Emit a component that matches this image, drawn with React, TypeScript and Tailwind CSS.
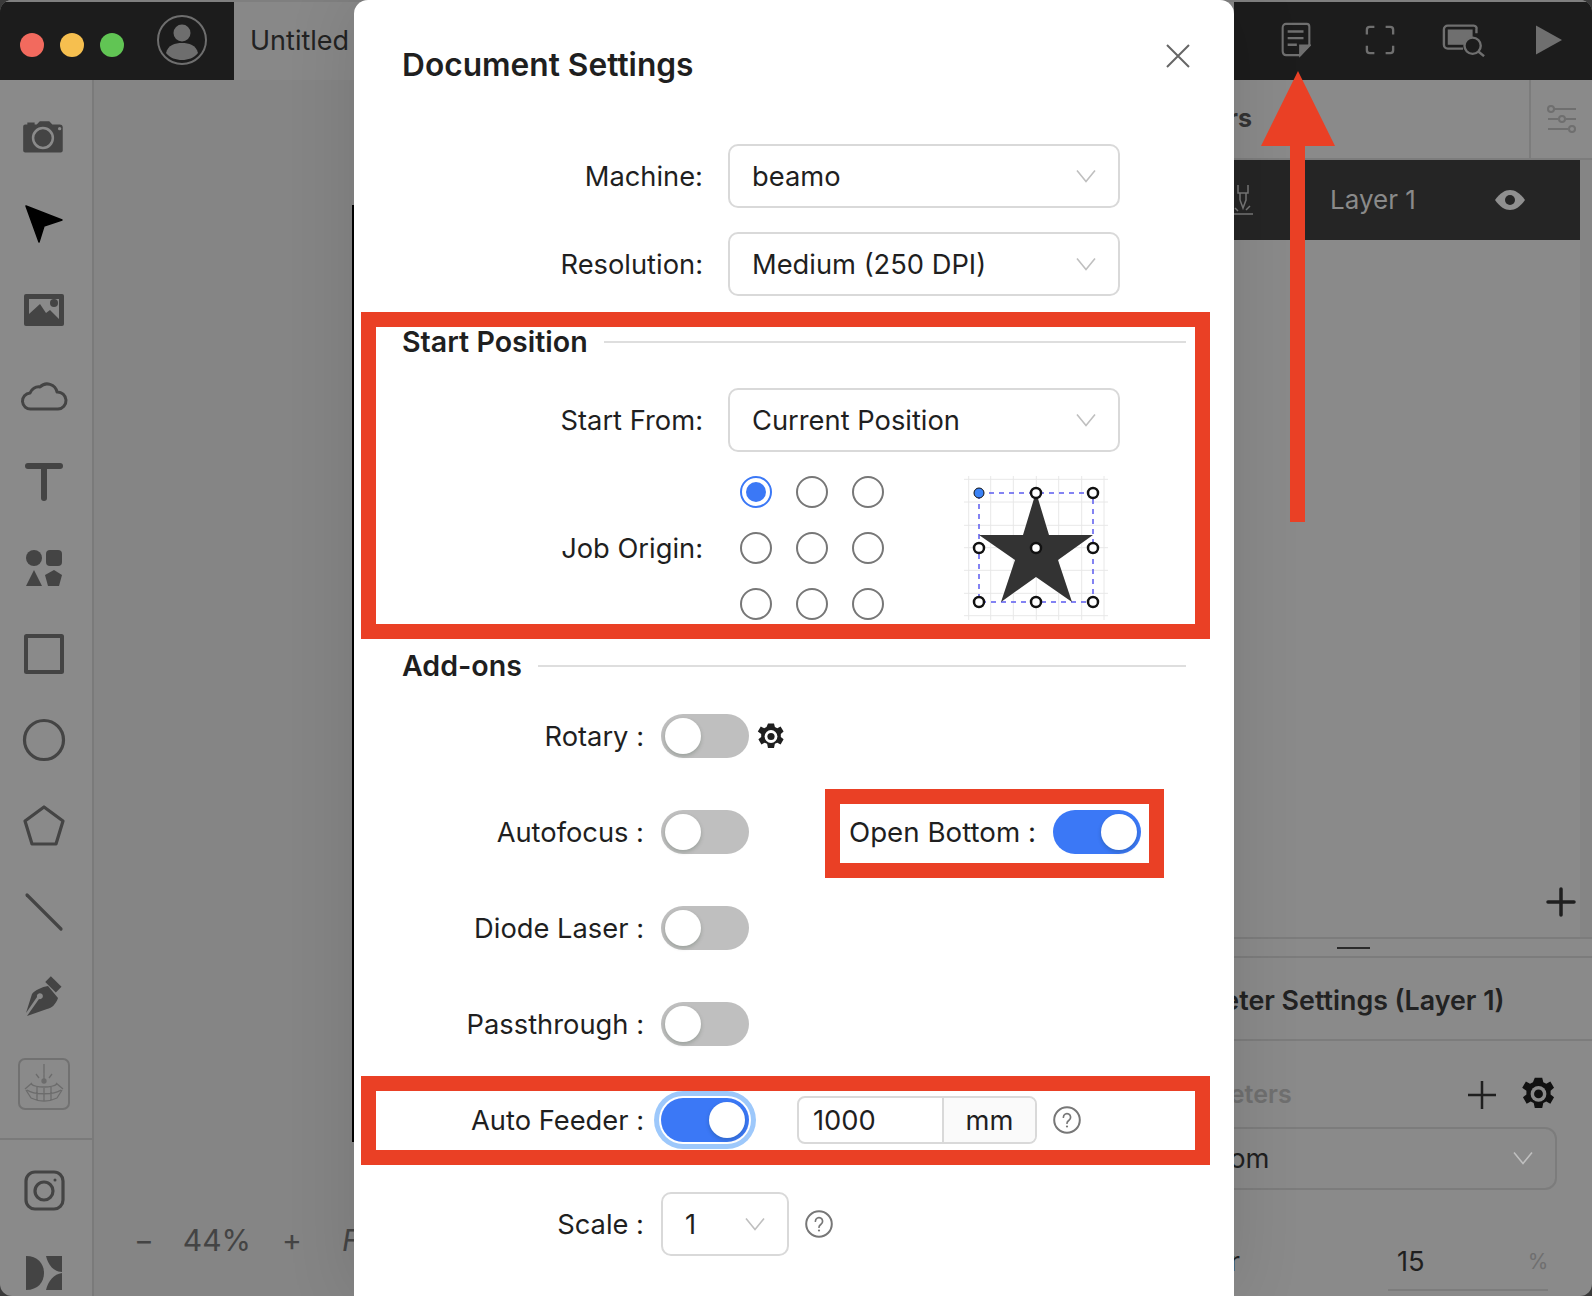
import React from "react";

const ink = "#444444";

function Slot({ children }: { children: React.ReactNode }) {
  return <div className="flex h-[86px] w-full items-center justify-center">{children}</div>;
}

function Glyph({ size = 48, children, fill = "none", stroke = ink, sw = 4 }: { size?: number; children: React.ReactNode; fill?: string; stroke?: string; sw?: number }) {
  return (
    <svg width={size} height={size} viewBox="0 0 48 48" fill={fill} stroke={stroke} strokeWidth={sw} strokeLinecap="round" strokeLinejoin="round">
      {children}
    </svg>
  );
}

function Chevron({ className = "" }: { className?: string }) {
  return (
    <svg width="20" height="14" viewBox="0 0 20 14" fill="none" stroke="#bfbfbf" strokeWidth="1.6" className={className}>
      <path d="M1 1.5 L10 12.5 L19 1.5" />
    </svg>
  );
}

function Select({ value, className = "" }: { value: string; className?: string }) {
  return (
    <div className={`flex h-[64px] w-[392px] items-center justify-between rounded-[10px] border-2 border-[#d9d9d9] bg-white pl-[22px] pr-[22px] text-[27.3px] text-[#1f1f1f] ${className}`}>
      <span className="pt-[2px]">{value}</span>
      <Chevron />
    </div>
  );
}

function Toggle({ on = false, focus = false }: { on?: boolean; focus?: boolean }) {
  return (
    <div
      className={`flex h-[44px] w-[88px] shrink-0 items-center rounded-full px-[4px] ${on ? "justify-end bg-[#3b78f6]" : "justify-start bg-[#bfbfbf]"} ${focus ? "shadow-[0_0_0_2px_#ffffff,0_0_0_7px_#9dc8fb]" : ""}`}
    >
      <div className="h-[36px] w-[36px] rounded-full bg-white shadow-[0_2px_4px_rgba(0,35,11,0.2)]" />
    </div>
  );
}

function Help() {
  return (
    <svg width="28" height="28" viewBox="0 0 28 28" fill="none">
      <circle cx="14" cy="14" r="12.8" stroke="#777777" strokeWidth="2" />
      <path d="M10.4 11.2a3.6 3.6 0 1 1 5.6 3c-1.300.9-2 1.500-2 3" stroke="#777777" strokeWidth="1.7" strokeLinecap="round" />
      <circle cx="14" cy="20.500" r="1.100" fill="#777777" />
    </svg>
  );
}

function Gear({ color = "#1f1f1f", hole = "#ffffff", size = 30 }: { color?: string; hole?: string; size?: number }) {
  return (
    <svg width={size} height={size} viewBox="0 0 30 30">
      <path
        fill={color}
        d="M12 1.500h6l.9 3.600 2.400 1.100 3.300-1.700 3 5.100-2.800 2.400v2.900l2.800 2.400-3 5.100-3.300-1.700-2.400 1.100-.9 4.200h-6l-.9-4.200-2.400-1.100-3.300 1.700-3-5.100 2.800-2.400v-2.900L1.800 9.600l3-5.100 3.300 1.700 2.400-1.100z"
      />
      <circle cx="15" cy="14.500" r="6.400" fill={hole} />
      <circle cx="15" cy="14.500" r="3.600" fill={color} />
    </svg>
  );
}

function Heading({ title }: { title: string }) {
  return (
    <div className="ml-[48px] mr-[48px] flex h-[24px] items-center gap-[16px]">
      <span className="whitespace-nowrap text-[28.6px] font-semibold leading-[24px] text-[#1f1f1f]">{title}</span>
      <div className="h-[2px] flex-1 bg-[#dedede]" />
    </div>
  );
}

function AddOn({ label, children }: { label: string; children: React.ReactNode }) {
  return (
    <div className="flex h-[44px] items-center">
      <span className="w-[290px] whitespace-nowrap pt-[2px] text-right text-[27.3px] text-[#1f1f1f]">{label}</span>
      <div className="ml-[17px] flex items-center">{children}</div>
    </div>
  );
}

function Radio({ on = false }: { on?: boolean }) {
  return (
    <div className={`flex h-[32px] w-[32px] items-center justify-center rounded-full border-2 ${on ? "border-[#3b78f6]" : "border-[#777777]"} bg-white`}>
      {on ? <div className="h-[20px] w-[20px] rounded-full bg-[#3b78f6]" /> : null}
    </div>
  );
}

function StarDiagram() {
  const vs = [4.7, 26.7, 49.3, 72.3, 94.7, 117.7, 140];
  const hs = [3.3, 26, 49.3, 71.7, 94.3, 117.3, 139.7];
  const hx = [15, 72, 129];
  const hy = [17, 72, 126];
  return (
    <svg width="144" height="144" viewBox="0 0 144 144" className="shrink-0">
      {vs.map((x) => (
        <line key={x} x1={x} x2={x} y1="0" y2="144" stroke="#e8e8e8" strokeWidth="1" />
      ))}
      {hs.map((y) => (
        <line key={y} x1="0" x2="144" y1={y} y2={y} stroke="#e8e8e8" strokeWidth="1" />
      ))}
      <rect x="15" y="17" width="114" height="109" fill="none" stroke="#5b5bf0" strokeWidth="1.500" strokeDasharray="5 5" />
      <polygon points="72,16 85,59 129,59 94,84 108,126 72,101 37,126 51,84 15,59 59,59" fill="#333333" />
      {hy.map((y, r) =>
        hx.map((x, c) => (
          <circle key={`${r}-${c}`} cx={x} cy={y} r="5" fill={r === 0 && c === 0 ? "#3b82f6" : "#ffffff"} stroke="#111111" strokeWidth={r === 0 && c === 0 ? 1 : 2.5} />
        ))
      )}
    </svg>
  );
}

function Sidebar() {
  return (
    <div className="flex h-full w-[94px] shrink-0 flex-col border-r-2 border-[#7a7a7a] bg-[#8a8a8a]">
      <div className="pr-[4px] pt-[15px]">
        <Slot>
          <Glyph size={50}>
            <path fill={ink} stroke="none" d="M4 13a2 2 0 0 1 2-2h2V9h7v2h2l3-3h9l3 3h7a3 3 0 0 1 3 3v22a2 2 0 0 1-2 2H6a2 2 0 0 1-2-2z" />
            <circle cx="23" cy="24" r="9.500" fill="none" stroke="#8a8a8a" strokeWidth="2.400" />
            <circle cx="39" cy="15" r="1.600" fill="#8a8a8a" stroke="none" />
          </Glyph>
        </Slot>
        <Slot>
          <Glyph>
            <path fill="#000000" stroke="#000000" strokeWidth="1.500" d="M6 6 L42 20 L24 26 L19 42 Z" />
          </Glyph>
        </Slot>
        <Slot>
          <Glyph>
            <rect x="4" y="8" width="40" height="32" rx="2" fill={ink} stroke="none" />
            <path fill="#8a8a8a" stroke="none" d="M9 28 V13 H39 V33 L30 24 L26 27 L20 18 Z" />
            <circle cx="34" cy="17" r="4" fill={ink} stroke="none" />
          </Glyph>
        </Slot>
        <Slot>
          <Glyph sw={3}>
            <path d="M11 37a8 8 0 0 1-1-16 9 9 0 0 1 10-6 10 10 0 0 1 17 5 8.500 8.500 0 0 1 1 17z" />
          </Glyph>
        </Slot>
        <Slot>
          <Glyph sw={6}>
            <path d="M8 8 H40 M24 8 V40" />
          </Glyph>
        </Slot>
        <Slot>
          <Glyph sw={0}>
            <circle cx="14" cy="14" r="8" fill={ink} />
            <rect x="26" y="6" width="16" height="16" rx="4" fill={ink} />
            <path d="M14 26 L22 42 H6 Z" fill={ink} />
            <path d="M34 26 L42 31 L39 42 H28 L25 31 Z" fill={ink} />
          </Glyph>
        </Slot>
        <Slot>
          <Glyph sw={4}>
            <rect x="6" y="6" width="36" height="36" rx="0.500" strokeLinejoin="miter" />
          </Glyph>
        </Slot>
        <Slot>
          <Glyph sw={3.200}>
            <circle cx="24" cy="24" r="19.500" />
          </Glyph>
        </Slot>
        <Slot>
          <Glyph sw={3.200}>
            <path d="M24 5 L43 19 L36 42 H12 L5 19 Z" />
          </Glyph>
        </Slot>
        <Slot>
          <Glyph sw={3.200}>
            <path d="M7 7 L41 41" />
          </Glyph>
        </Slot>
        <Slot>
          <Glyph>
            <path fill={ink} stroke="none" d="M28 12 L38 24 C36 30 32 34 27 35 L7 42 L19 25 a3 3 0 1 0 -2 -2 L6 39 L12 20 C15 16 22 13 28 12 Z" />
            <rect x="29" y="3" width="8" height="15" transform="rotate(-45 33 10)" fill={ink} stroke="none" />
          </Glyph>
        </Slot>
        <Slot>
          <div className="flex h-[52px] w-[52px] items-center justify-center rounded-[7px] border-2 border-[#717171]">
            <svg width="46" height="46" viewBox="0 0 46 46" fill="none" stroke="#6c6c6c" strokeWidth="1.300">
              <path d="M23 3 V20 M15 13 l3 4 M31 13 l-3 4" />
              <circle cx="23" cy="20" r="2" fill="#6c6c6c" />
              <path d="M6 29 C13 34 33 34 40 29 M10 23 C15 27 31 27 36 23 M4 28 L11 22 M42 28 L35 22 M10 37 C18 41 28 41 36 37 M5 29 L10 37 M41 29 L36 37 M16 26 V39 M23 27 V40 M30 26 V39" />
            </svg>
          </div>
        </Slot>
      </div>
      <div className="mt-[11px] border-t-2 border-[#7a7a7a] pr-[4px] pt-[8px]">
        <Slot>
          <Glyph sw={3.200}>
            <rect x="6" y="5" width="37" height="37" rx="9" />
            <circle cx="24" cy="24" r="9" />
            <circle cx="35" cy="13" r="1.500" fill={ink} stroke="none" />
          </Glyph>
        </Slot>
        <div className="mt-[22px] flex justify-center">
          <svg width="36" height="34" viewBox="0 0 36 34" fill={ink}>
            <path d="M0 0 C12 0 18 8 18 17 C18 26 12 34 0 34 Z" />
            <path d="M20 0 H36 V16 C28 16 22 9 20 0 Z" />
            <path d="M36 17 V34 H20 C22 25 28 18 36 17 Z" />
          </svg>
        </div>
      </div>
    </div>
  );
}

function TopBar() {
  return (
    <div className="flex h-[80px] shrink-0 border-t-2 border-[#7f7f7f] bg-[#888888]">
      <div className="flex w-[234px] items-center bg-[#1c1c1c] pl-[20px]">
        <div className="mt-[7px] h-[24px] w-[24px] rounded-full bg-[#f26a5e]" />
        <div className="ml-[16px] mt-[7px] h-[24px] w-[24px] rounded-full bg-[#f6bf4f]" />
        <div className="ml-[16px] mt-[7px] h-[24px] w-[24px] rounded-full bg-[#61c554]" />
        <svg width="50" height="50" viewBox="0 0 50 50" className="ml-[33px] -mt-[2px]">
          <circle cx="25" cy="25" r="24" fill="none" stroke="#6e6e6e" strokeWidth="2" />
          <circle cx="25" cy="18" r="8.500" fill="#6e6e6e" />
          <path d="M9 38 C11 30 18 28 25 28 C32 28 39 30 41 38 C37 43 31 45 25 45 C19 45 13 43 9 38 Z" fill="#6e6e6e" />
        </svg>
      </div>
      <div className="flex flex-1 items-center pl-[16px]">
        <span className="pt-[1px] text-[27px] text-[#222222]">Untitled</span>
      </div>
      <div className="flex w-[358px] items-center bg-[#1c1c1c] pl-[47px] text-[#6f6f6f]">
        <svg width="30" height="36" viewBox="0 0 36 38" preserveAspectRatio="none" fill="none" stroke="#6f6f6f" strokeWidth="2.500" className="-mt-[2px] shrink-0">
          <path d="M6 2 H31 A3 3 0 0 1 34 5 V24 L23 35 H6 A4 4 0 0 1 2 31 V6 A4 4 0 0 1 6 2 Z" />
          <path d="M8 10 H27 M8 17 H27 M8 24 H19" />
          <path d="M23 35 V25 H34 Z" fill="#6f6f6f" />
        </svg>
        <svg width="30" height="30" viewBox="0 0 32 32" fill="none" stroke="#6f6f6f" strokeWidth="2.500" className="-mt-[2px] ml-[54px] shrink-0">
          <path d="M2 10 V5 A3 3 0 0 1 5 2 H10 M22 2 H27 A3 3 0 0 1 30 5 V10 M30 22 V27 A3 3 0 0 1 27 30 H22 M10 30 H5 A3 3 0 0 1 2 27 V22" />
        </svg>
        <svg width="44" height="34" viewBox="0 0 46 34" fill="none" stroke="#6f6f6f" strokeWidth="2.500" className="-mt-[2px] ml-[47px] shrink-0">
          <path d="M22 26 H6 A4 4 0 0 1 2 22 V6 A4 4 0 0 1 6 2 H33 A3 3 0 0 1 36 6 V10" />
          <rect x="6" y="6" width="26" height="16" fill="#6f6f6f" stroke="none" />
          <circle cx="32" cy="23" r="8.500" fill="#1c1c1c" />
          <path d="M38 29 L44 34" />
        </svg>
        <svg width="27" height="32" viewBox="0 0 28 32" fill="#6f6f6f" className="-mt-[2px] ml-[50px] shrink-0">
          <path d="M0 1 L27 16 L0 31 Z" />
        </svg>
      </div>
    </div>
  );
}

function RightPanel() {
  return (
    <div className="flex h-full w-[400px] shrink-0 flex-col bg-[#8a8a8a] text-[#1f1f1f]">
      <div className="flex h-[80px] shrink-0 border-b-2 border-[#7c7c7c]">
        <div className="flex w-[337px] items-center justify-end pr-[277px]">
          <span className="text-[25px] font-bold text-[#333333]">Layers</span>
        </div>
        <div className="flex flex-1 items-center justify-center border-l-2 border-[#7c7c7c]">
          <svg width="32" height="28" viewBox="0 0 32 28" fill="none" stroke="#6f6f6f" strokeWidth="2">
            <path d="M8 4 H30 M2 14 H12 M20 14 H30 M2 24 H22" />
            <circle cx="5" cy="4" r="3" />
            <circle cx="16" cy="14" r="3" />
            <circle cx="26" cy="24" r="3" />
          </svg>
        </div>
      </div>
      <div className="flex h-[779px] shrink-0 flex-col border-b-2 border-[#7c7c7c]">
        <div className="flex">
          <div className="flex h-[80px] w-[388px] items-center bg-[#252525]">
            <svg width="24" height="32" viewBox="0 0 24 32" fill="none" stroke="#777777" strokeWidth="1.500" className="ml-[38px]">
              <path d="M8 1 V9 H18 V1 M10 9 V16 M16 9 V16 L13 24 L10 16 M2 30 H23 M5 24 L8 27 M20 22 L16 26" />
            </svg>
            <span className="-mt-[2px] ml-[76px] w-[90px] text-[26px] text-[#8a8a8a]">Layer 1</span>
            <svg width="30" height="20" viewBox="0 0 30 20" className="ml-[75px]">
              <path fill="#8f8f8f" d="M0 10 C5 3 10 0 15 0 C20 0 25 3 30 10 C25 17 20 20 15 20 C10 20 5 17 0 10 Z" />
              <circle cx="15" cy="10" r="5" fill="#252525" />
            </svg>
          </div>
          <div className="flex-1 bg-[#858585]" />
        </div>
        <div className="flex flex-1">
          <div className="flex w-[388px] items-end justify-end pb-[20px] pr-[4px]">
            <svg width="30" height="30" viewBox="0 0 30 30" stroke="#1f1f1f" strokeWidth="3.500" strokeLinecap="round">
              <path d="M15 2 V28 M2 15 H28" />
            </svg>
          </div>
          <div className="flex-1 bg-[#858585]" />
        </div>
      </div>
      <div className="flex h-[19px] shrink-0 items-center border-b-2 border-[#7c7c7c] pl-[145px]">
        <div className="h-[2px] w-[33px] bg-[#2a2a2a]" />
      </div>
      <div className="flex h-[83px] shrink-0 items-center border-b-2 border-[#7c7c7c]">
        <span className="-ml-[51px] whitespace-nowrap pt-[4px] text-[26.8px] font-semibold text-[#222222]">Parameter Settings (Layer 1)</span>
      </div>
      <div className="flex items-center pt-[35px]">
        <span className="w-[290px] pr-[190px] text-right text-[25px] font-semibold text-[#6f6f6f]">
          <span className="relative right-[39px]">Parameters</span>
        </span>
        <svg width="28" height="28" viewBox="0 0 28 28" stroke="#1f1f1f" strokeWidth="2.500" className="-ml-[14px]">
          <path d="M14 0 V28 M0 14 H28" />
        </svg>
        <div className="ml-[24px]">
          <Gear color="#111111" hole="#8a8a8a" size={37} />
        </div>
      </div>
      <div className="ml-[-50px] mt-[13px] flex h-[63px] w-[415px] shrink-0 items-center justify-between rounded-[12px] border-2 border-[#7c7c7c] pl-[26px] pr-[22px]">
        <span className="pt-[2px] text-[27.3px] text-[#1f1f1f]">Custom</span>
        <Chevron />
      </div>
      <div className="flex items-center pt-[52px]">
        <span className="w-[48px] text-right text-[27.3px] text-[#1f1f1f]" dir="rtl">
          <span dir="ltr" className="whitespace-nowrap">Power</span>
        </span>
        <span className="ml-[157px] text-[27.3px] text-[#1f1f1f]">15</span>
        <span className="ml-[103px] text-[21px] text-[#6f6f6f]">%</span>
      </div>
      <div className="ml-[196px] mt-[7px] h-[2px] w-[160px] shrink-0 bg-[#7c7c7c]" />
    </div>
  );
}

function Dialog() {
  return (
    <div className="absolute left-[354px] top-0 h-[1296px] w-[880px] overflow-hidden rounded-t-[14px] bg-white shadow-[0_0_70px_rgba(0,0,0,0.12)]">
      <div className="flex h-[112px] justify-between pl-[48px] pr-[44px] pt-[44px]">
        <span className="mt-[1px] text-[31.7px] font-semibold leading-[40px] text-[#1f1f1f]">Document Settings</span>
        <svg width="24" height="24" viewBox="0 0 24 24" stroke="#666666" strokeWidth="2">
          <path d="M1 1 L23 23 M23 1 L1 23" />
        </svg>
      </div>
      <div className="mt-[32px] flex items-center">
        <span className="w-[349px] pt-[2px] text-right text-[27.3px] text-[#1f1f1f]">Machine:</span>
        <Select value="beamo" className="ml-[25px]" />
      </div>
      <div className="mt-[24px] flex items-center">
        <span className="w-[349px] pt-[2px] text-right text-[27.3px] text-[#1f1f1f]">Resolution:</span>
        <Select value="Medium (250 DPI)" className="ml-[25px]" />
      </div>
      <div className="mt-[34px]">
        <Heading title="Start Position" />
      </div>
      <div className="mt-[34px] flex items-center">
        <span className="w-[349px] pt-[2px] text-right text-[27.3px] text-[#1f1f1f]">Start From:</span>
        <Select value="Current Position" className="ml-[25px]" />
      </div>
      <div className="mt-[24px] flex h-[144px] items-center">
        <span className="w-[349px] pt-[2px] text-right text-[27.3px] text-[#1f1f1f]">Job Origin:</span>
        <div className="ml-[37px] grid grid-cols-3 gap-[24px]">
          <Radio on />
          <Radio />
          <Radio />
          <Radio />
          <Radio />
          <Radio />
          <Radio />
          <Radio />
          <Radio />
        </div>
        <div className="ml-[80px]">
          <StarDiagram />
        </div>
      </div>
      <div className="mt-[34px]">
        <Heading title="Add-ons" />
      </div>
      <div className="mt-[36px] flex flex-col gap-[52px]">
        <AddOn label="Rotary :">
          <Toggle />
          <div className="ml-[7px] mt-[1px]">
            <Gear />
          </div>
        </AddOn>
        <AddOn label="Autofocus :">
          <Toggle />
          <span className="ml-[100px] w-[204px] whitespace-nowrap pt-[2px] text-[27.7px] text-[#1f1f1f]">Open Bottom :</span>
          <Toggle on />
        </AddOn>
        <AddOn label="Diode Laser :">
          <Toggle />
        </AddOn>
        <AddOn label="Passthrough :">
          <Toggle />
        </AddOn>
        <AddOn label="Auto Feeder :">
          <Toggle on focus />
          <div className="ml-[48px] flex h-[48px] w-[240px] overflow-hidden rounded-[8px] border-2 border-[#d9d9d9] text-[27.3px] text-[#1f1f1f]">
            <div className="flex w-[143px] items-center pl-[14px] pt-[2px]">1000</div>
            <div className="flex flex-1 items-center justify-center border-l-2 border-[#d9d9d9] bg-[#fafafa] pt-[2px]">mm</div>
          </div>
          <div className="ml-[16px]">
            <Help />
          </div>
        </AddOn>
      </div>
      <div className="mt-[50px] flex items-center">
        <span className="w-[290px] pt-[2px] text-right text-[27.3px] text-[#1f1f1f]">Scale :</span>
        <div className="ml-[17px] flex h-[64px] w-[128px] items-center justify-between rounded-[10px] border-2 border-[#d9d9d9] pl-[22px] pr-[22px] text-[27.3px] text-[#1f1f1f]">
          <span className="pt-[2px]">1</span>
          <Chevron />
        </div>
        <div className="ml-[16px]">
          <Help />
        </div>
      </div>

      <div className="absolute left-[7px] top-[312px] h-[327px] w-[849px] border-[15px] border-[#ea4025]" />
      <div className="absolute left-[471px] top-[789px] h-[89px] w-[339px] border-[15px] border-[#ea4025]" />
      <div className="absolute left-[7px] top-[1076px] h-[89px] w-[849px] border-[15px] border-[#ea4025]" />
    </div>
  );
}

export default function App() {
  return (
    <div className="relative h-[1296px] w-[1592px] overflow-hidden bg-[#3a3a3a] font-['Inter','Liberation_Sans',sans-serif]">
      <div className="flex h-full flex-col overflow-hidden rounded-[12px]">
        <TopBar />
        <div className="flex min-h-0 flex-1">
          <Sidebar />
          <div className="flex flex-1 flex-col bg-[#858585]">
            <div className="ml-[258px] mt-[125px] h-[937px] w-[2px] bg-black" />
            <div className="mt-[76px] flex items-center pl-[40px] text-[30px] text-[#444444]">
              <span className="text-[30px]">−</span>
              <span className="ml-[29px]">44%</span>
              <span className="ml-[31px]">+</span>
              <span className="ml-[40px] italic">F</span>
            </div>
          </div>
          <RightPanel />
        </div>
      </div>
      <Dialog />
      <svg width="76" height="454" viewBox="0 0 76 454" className="absolute left-[1260px] top-[70px]">
        <path fill="#ea4025" d="M38 1 L75 76 H45 V452 H30 V76 H1 Z" />
      </svg>
    </div>
  );
}
